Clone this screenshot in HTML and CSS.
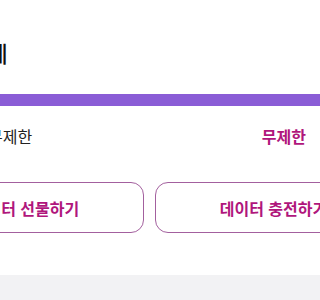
FILE: index.html
```html
<!DOCTYPE html>
<html lang="ko">
<head>
<meta charset="utf-8">
<link rel="stylesheet" href="styles.css">
</head>
<body>
<div class="viewport">
  <div class="page">
    <h1 class="title">요금제</h1>
    <div class="bar"><div class="fill"></div></div>
    <div class="row">
      <span class="label">무제한</span>
      <span class="value">무제한</span>
    </div>
    <div class="buttons">
      <button class="btn">데이터 선물하기</button>
      <button class="btn">데이터 충전하기</button>
    </div>
  </div>
  <div class="footer"></div>
</div>
</body>
</html>
```
FILE: styles.css
```css
html, body {
  margin: 0;
  padding: 0;
  background: #fff;
  overflow: hidden;
  font-family: "Noto Sans CJK KR", "Noto Sans", sans-serif;
}
.viewport {
  width: 100%;
  height: 100vh;
  overflow: hidden;
}
.page {
  margin-left: -93px;
  width: 485px;
}
.title {
  margin: 0;
  padding: 37px 0 0 40px;
  font-size: 22px;
  line-height: 30px;
  font-weight: 500;
  color: #111;
  white-space: nowrap;
}
.bar {
  margin-top: 27px;
  height: 12px;
  border-radius: 6px;
  background: #ece4f8;
  overflow: hidden;
}
.fill {
  height: 100%;
  width: 100%;
  background: #8a5dd6;
}
.row {
  margin-top: 18px;
  display: flex;
  justify-content: space-between;
  padding: 0 86px 0 81px;
  font-size: 16px;
  line-height: 24px;
  white-space: nowrap;
}
.label {
  color: #222;
}
.value {
  color: #b0167c;
  font-weight: 700;
}
.buttons {
  margin-top: 34px;
  display: flex;
  gap: 11px;
}
.btn {
  flex: 1;
  height: 51px;
  border: 1.5px solid #a3609e;
  border-radius: 13px;
  background: #fff;
  color: #b0167c;
  font-family: inherit;
  font-size: 16px;
  font-weight: 700;
  padding: 0;
  white-space: nowrap;
}
.footer {
  margin-top: 42px;
  height: 40px;
  background: #f2f2f4;
}
```
